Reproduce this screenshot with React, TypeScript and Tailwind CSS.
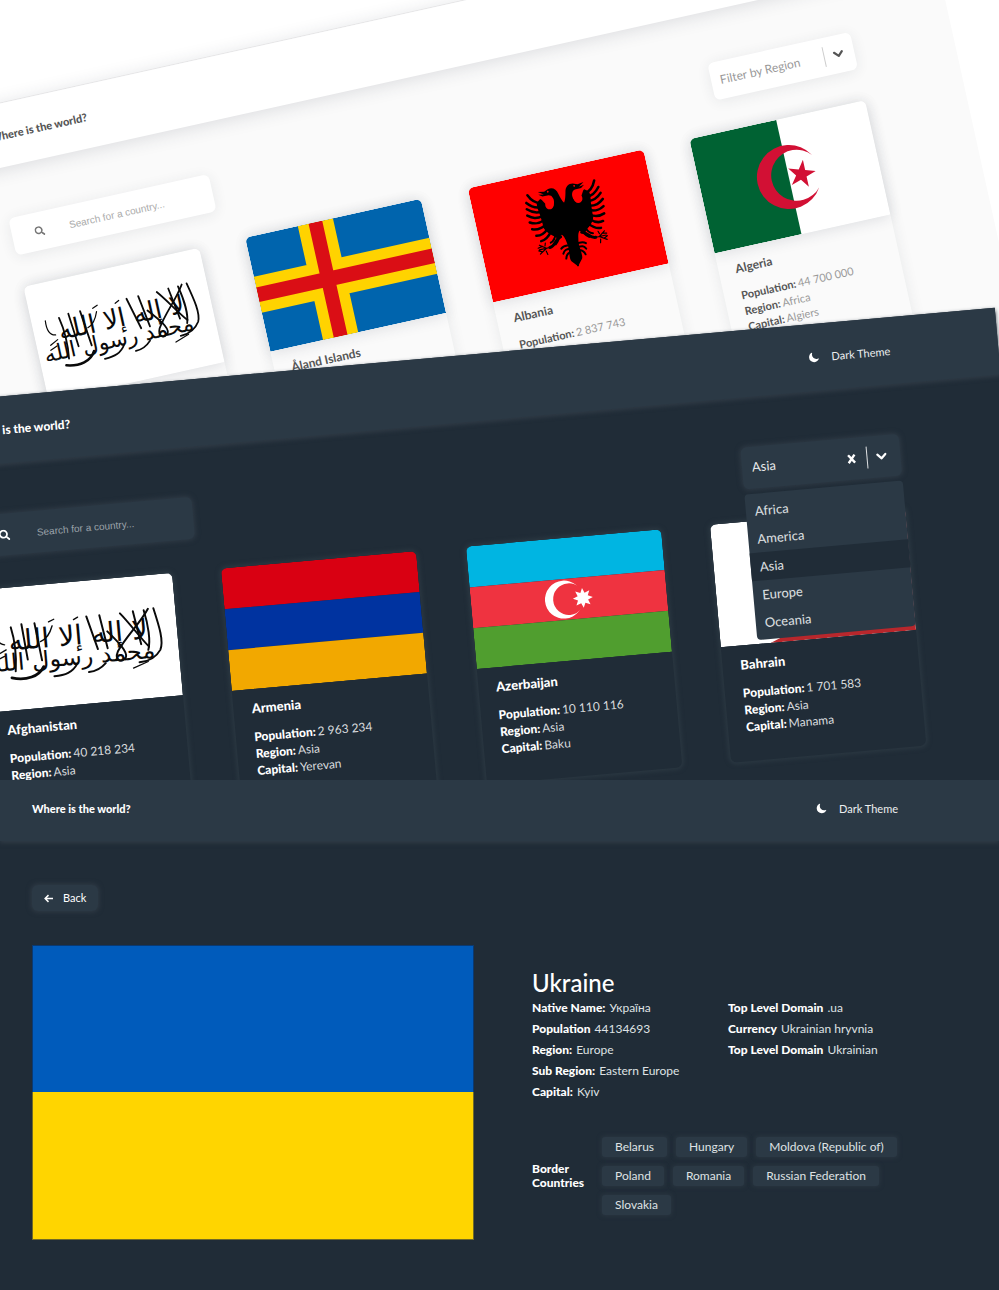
import React from "react";
import { FaSearch } from "react-icons/fa";
import { IoMoon } from "react-icons/io5";

type Theme = "light" | "dark";

type Country = {
  name: string;
  population: string;
  region: string;
  capital: string;
  flag: React.ReactNode;
};

const FLAG = "block h-full w-full";

function starPoints(cx: number, cy: number, outer: number, inner: number, tips: number, start = 0) {
  return Array.from({ length: tips * 2 }, (_, i) => {
    const r = i % 2 === 0 ? outer : inner;
    const a = start + (Math.PI * i) / tips;
    return `${(cx + r * Math.cos(a)).toFixed(2)},${(cy + r * Math.sin(a)).toFixed(2)}`;
  }).join(" ");
}

function AfghanistanFlag() {
  return (
    <svg viewBox="0 0 180 117" preserveAspectRatio="none" className={FLAG} role="img" aria-label="Flag of Afghanistan">
      <rect width="180" height="117" fill="#fff" />
      <g fill="#0a0a0a" fontFamily="'DejaVu Sans', sans-serif" textAnchor="middle" direction="rtl">
        <text x="89" y="60" fontSize="26">لا إله إلا الله</text>
        <text x="82" y="79" fontSize="22">محمد رسول الله</text>
      </g>
      <g fill="none" stroke="#0a0a0a" strokeLinecap="round" strokeWidth="1.8">
        <path d="M160 32c4 18 7 32 3 40-4 6-11 10-20 10" />
        <path d="M151 33c3 14 4 30 1 38M141 33l5 32" />
        <path d="M155 32c-9 14-22 24-31 38-4 8 3 12 7 6 2-5-5-14-15-26" />
        <path d="M129 34c8 10 16 24 24 34" />
        <path d="M110 34l5 32M98 34l8 32" />
        <path d="M55 78c-5 9-17 12-30 8" strokeWidth="2.6" />
        <path d="M86 78c-5 8-12 10-22 10M112 80c-5 5-10 7-16 7" />
        <path d="M28 38c3 14 3 28 1 42M38 36l3 34M50 36l4 36" />
        <path d="M14 38c-1 10 1 15 7 16M14 63l8-4M13 68l7-3" strokeWidth="1.2" />
        <path d="M63 36l5-2M66 40c-3 8-6 12-12 14M86 36l4-2M137 87l14-5" strokeWidth="1.2" />
      </g>
    </svg>
  );
}

function AlandFlag() {
  return (
    <svg viewBox="0 0 180 117" preserveAspectRatio="none" className={FLAG} role="img" aria-label="Flag of Åland">
      <rect width="180" height="117" fill="#0064ad" />
      <path d="M54 0h36v117H54zM0 40h180v37H0z" fill="#ffd300" />
      <path d="M65 0h14v117H65zM0 51h180v15H0z" fill="#da0e15" />
    </svg>
  );
}

function EagleHalf() {
  return (
    <g>
      <path d="M-1 29H0C2 26 3 22 4 18C5 12 9 9 14 10L19 12L26 11L20 15L26 14L22 17L15 17C10 18 10 24 12 29C14 33 20 32 20 26C22 24 23 20 25 19L29 22C31 24 30 30 29 36L28 52C25 60 18 62 16 66L10 63C7 66 7 72 6 76C6 84 8 91 6 94L0 101H-1Z" />
      <g fill="none" stroke="#000" strokeLinecap="round">
        <path d="M24 24C31 23 35 19 38 12M26 28C33 28 37 25 41 20M26 33C34 34 38 31 42 27M26 38C34 40 38 38 43 34M26 43C33 46 37 45 42 42M25 48C31 52 36 52 41 50M24 53C29 58 34 59 38 58M21 57C25 62 30 65 34 65" strokeWidth="2.8" />
        <path d="M16 59c2 6 4 9 8 10M12 60c1 5 3 9 7 12" strokeWidth="2.2" />
        <path d="M4 76c5 0 7-1 10 2M4 80c5 0 7 0 9 4M4 84c4 0 6 2 7 6" strokeWidth="2.2" />
        <path d="M12 65c6 1 8 9 14 9" strokeWidth="3.4" />
        <path d="M25 74l13 0M30 74l7-5M30 74l8 5M34 71l5 1M35 77l4-2M31 77l-1 4M31 71l-1-3" strokeWidth="1.3" />
      </g>
      <path d="M12 22C11 27 14 33 18 31C21 29 20 24 17 23" fill="none" stroke="#f00" strokeWidth="2.4" strokeLinecap="round" />
      <circle cx="15" cy="13" r="1" fill="#f00" />
    </g>
  );
}

function AlbaniaFlag() {
  return (
    <svg viewBox="0 0 180 117" preserveAspectRatio="none" className={FLAG} role="img" aria-label="Flag of Albania">
      <rect width="180" height="117" fill="#f00" />
      <g transform="translate(91 9) scale(0.9)">
        <EagleHalf />
        <g transform="scale(-1 1)">
          <EagleHalf />
        </g>
      </g>
    </svg>
  );
}

function AlgeriaFlag() {
  return (
    <svg viewBox="0 0 180 117" preserveAspectRatio="none" className={FLAG} role="img" aria-label="Flag of Algeria">
      <rect width="180" height="117" fill="#fff" />
      <rect width="89" height="117" fill="#006233" />
      <path d="M116.500 42A32 32 0 1 0 116.500 75A25.500 25.500 0 1 1 116.500 42Z" fill="#d21034" />
      <polygon points={starPoints(102, 58.500, 14.500, 5.500, 5)} fill="#d21034" />
    </svg>
  );
}

function ArmeniaFlag() {
  return (
    <svg viewBox="0 0 196 123" preserveAspectRatio="none" className={FLAG} role="img" aria-label="Flag of Armenia">
      <rect width="196" height="41" fill="#d90012" />
      <rect y="41" width="196" height="41" fill="#0033a0" />
      <rect y="82" width="196" height="41" fill="#f2a800" />
    </svg>
  );
}

function AzerbaijanFlag() {
  return (
    <svg viewBox="0 0 196 123" preserveAspectRatio="none" className={FLAG} role="img" aria-label="Flag of Azerbaijan">
      <rect width="196" height="41" fill="#00b5e2" />
      <rect y="41" width="196" height="41" fill="#ef3340" />
      <rect y="82" width="196" height="41" fill="#509e2f" />
      <circle cx="93" cy="61.500" r="19" fill="#fff" />
      <circle cx="98" cy="61.500" r="15.800" fill="#ef3340" />
      <polygon points={starPoints(112, 61.500, 10, 5.500, 8)} fill="#fff" />
    </svg>
  );
}

function BahrainFlag() {
  return (
    <svg viewBox="0 0 196 123" preserveAspectRatio="none" className={FLAG} role="img" aria-label="Flag of Bahrain">
      <rect width="196" height="123" fill="#fff" />
      <path d="M196 0H50L80 12.300L50 24.600L80 36.900L50 49.200L80 61.500L50 73.800L80 86.100L50 98.400L80 110.700L50 123H196Z" fill="#b8272c" />
    </svg>
  );
}

const lightCountries: Country[] = [
  { name: "Afghanistan", population: "40 218 234", region: "Asia", capital: "Kabul", flag: <AfghanistanFlag /> },
  { name: "Åland Islands", population: "28 875", region: "Europe", capital: "Mariehamn", flag: <AlandFlag /> },
  { name: "Albania", population: "2 837 743", region: "Europe", capital: "Tirana", flag: <AlbaniaFlag /> },
  { name: "Algeria", population: "44 700 000", region: "Africa", capital: "Algiers", flag: <AlgeriaFlag /> },
];

const darkCountries: Country[] = [
  { name: "Afghanistan", population: "40 218 234", region: "Asia", capital: "Kabul", flag: <AfghanistanFlag /> },
  { name: "Armenia", population: "2 963 234", region: "Asia", capital: "Yerevan", flag: <ArmeniaFlag /> },
  { name: "Azerbaijan", population: "10 110 116", region: "Asia", capital: "Baku", flag: <AzerbaijanFlag /> },
  { name: "Bahrain", population: "1 701 583", region: "Asia", capital: "Manama", flag: <BahrainFlag /> },
];

const regions = ["Africa", "America", "Asia", "Europe", "Oceania"];

function Chevron() {
  return (
    <svg viewBox="0 0 12 8" className="h-2 w-3" fill="none" stroke="currentColor" strokeWidth="2.2" strokeLinecap="round" strokeLinejoin="round" aria-hidden="true">
      <path d="M2 2l4 4 4-4" />
    </svg>
  );
}

function ThemeButton() {
  return (
    <button type="button" className="flex items-center gap-3 text-[11px] leading-4 text-[#eceeef]">
      <IoMoon className="size-[11px] text-white" />
      Dark Theme
    </button>
  );
}

function SearchBox({ theme }: { theme: Theme }) {
  return (
    <label
      className={
        theme === "light"
          ? "flex h-[38px] w-[205px] items-center gap-[25px] rounded-md bg-white pl-[23px] shadow-[0_2px_14px_rgba(40,50,70,0.09)]"
          : "flex h-[42px] w-[222px] items-center gap-[27px] rounded-md bg-[#2b3945] pl-[27px] shadow-[0_0_5px_1px_#303b46]"
      }
    >
      <FaSearch className={theme === "light" ? "size-[10px] shrink-0 text-[#777]" : "size-[11px] shrink-0"} />
      <input
        type="search"
        aria-label="Search for a country"
        placeholder="Search for a country..."
        className={
          theme === "light"
            ? "min-w-0 flex-1 bg-transparent font-['Liberation_Sans',sans-serif] text-[10px] outline-none placeholder:text-[#aaa]"
            : "min-w-0 flex-1 bg-transparent font-['Liberation_Sans',sans-serif] text-[10px] outline-none placeholder:text-[#9ba3aa]"
        }
      />
    </label>
  );
}

function CountryCard({ country, theme }: { country: Country; theme: Theme }) {
  const light = theme === "light";
  return (
    <article
      className={
        light
          ? "w-[180px] rounded-md bg-[#fafafa] shadow-[0_0_14px_rgba(40,50,70,0.09)]"
          : "w-[196px] rounded-md bg-[#202c37] shadow-[0_0_4px_2px_#2b3842]"
      }
    >
      <div className={light ? "h-[117px] overflow-hidden rounded-t-md shadow-[0_2px_14px_rgba(40,50,70,0.13)]" : "h-[123px] overflow-hidden rounded-t-md"}>
        {country.flag}
      </div>
      <div className={light ? "px-[17px] pt-3 pb-8" : "px-[18px] pt-[10px] pb-[26px]"}>
        <h3 className={light ? "text-[12px] leading-4 font-bold text-[#555]" : "text-[13px] leading-[18px] font-black"}>{country.name}</h3>
        <dl className={light ? "pt-[11px] text-[11px] leading-4 text-[#999]" : "pt-[11px] text-[12px] leading-[17px] text-[#d8dbde]"}>
          {[
            ["Population:", country.population],
            ["Region:", country.region],
            ["Capital:", country.capital],
          ].map(([label, value]) => (
            <div key={label} className="flex gap-[2px]">
              <dt className={light ? "font-bold text-[#555]" : "font-black text-white"}>{label}</dt>
              <dd>{value}</dd>
            </div>
          ))}
        </dl>
      </div>
    </article>
  );
}

function LightPanel() {
  return (
    <section className="absolute top-[129px] left-[-115px] h-[520px] w-[calc(100%+64px)] origin-top-left rotate-[-12.5deg] bg-[#fafafa] text-[#555]">
      <header className="flex h-[63px] items-center bg-white pr-[100px] pl-[101px] shadow-[0_2px_18px_rgba(40,50,70,0.15)]">
        <h2 className="text-[11px] leading-4 font-black">Where is the world?</h2>
      </header>
      <div className="pt-[51px] pr-[100px] pl-[101px]">
        <div className="flex justify-between">
          <SearchBox theme="light" />
          <label className="flex h-[38px] w-[146px] items-center rounded-md bg-white pr-[10px] pl-[9px] shadow-[0_2px_14px_rgba(40,50,70,0.09)]">
            <select aria-label="Filter by Region" defaultValue="" className="min-w-0 flex-1 appearance-none bg-transparent text-[12px] text-[#999] outline-none">
              <option value="">Filter by Region</option>
              {regions.map((r) => (
                <option key={r}>{r}</option>
              ))}
            </select>
            <span className="mr-2 h-5 w-px bg-[#ccc]" />
            <Chevron />
          </label>
        </div>
        <div className="flex justify-between pt-8">
          {lightCountries.map((c) => (
            <CountryCard key={c.name} country={c} theme="light" />
          ))}
        </div>
      </div>
    </section>
  );
}

function DarkPanel() {
  return (
    <section className="absolute top-[404px] left-[-85px] h-[560px] w-[calc(100%+85px)] origin-top-left rotate-[-5.1deg] bg-[#202c37] text-white">
      <header className="flex h-[67px] items-center justify-between bg-[#2b3945] pr-[108px] pl-[45px] shadow-[0_2px_4px_#303b46]">
        <h2 className="text-[12px] leading-4 font-black">Where is the world?</h2>
        <ThemeButton />
      </header>
      <div className="pt-[50px] pr-[107px] pl-[45px]">
        <div className="flex justify-between">
          <SearchBox theme="dark" />
          <div className="relative w-[159px]">
            <div className="flex h-[42px] items-center rounded-md bg-[#2b3945] pr-[13px] pl-[10px] shadow-[0_0_5px_1px_#303b46]">
              <select aria-label="Region" defaultValue="Asia" className="min-w-0 flex-1 appearance-none bg-transparent text-[13px] text-[#e6e8ea] outline-none">
                {regions.map((r) => (
                  <option key={r}>{r}</option>
                ))}
              </select>
              <button type="button" aria-label="Clear region">
                <svg viewBox="0 0 10 10" className="size-[10px]" fill="none" stroke="currentColor" strokeWidth="2.4" aria-hidden="true">
                  <path d="M1.800 1l6.400 8M8.200 1l-6.400 8" />
                </svg>
              </button>
              <span className="mr-2 ml-[10px] h-[22px] w-px bg-[#dfe1e3]" />
              <Chevron />
            </div>
            <ul role="listbox" aria-label="Regions" className="absolute top-[47px] left-0 z-10 w-full rounded-sm bg-[#2b3945] py-[3px] text-[13px] leading-[28px] font-medium text-[#d5d9dc]">
              {regions.map((r) => (
                <li key={r} role="option" aria-selected={r === "Asia"} className={r === "Asia" ? "bg-[#202c37] px-[9px]" : "px-[9px]"}>
                  {r}
                </li>
              ))}
            </ul>
          </div>
        </div>
        <div className="flex justify-between pt-8">
          {darkCountries.map((c) => (
            <CountryCard key={c.name} country={c} theme="dark" />
          ))}
        </div>
      </div>
    </section>
  );
}

function Fact({ label, value }: { label: string; value: string }) {
  return (
    <div className="flex gap-[4px]">
      <dt className="font-black text-white">{label}</dt>
      <dd>{value}</dd>
    </div>
  );
}

const borders = ["Belarus", "Hungary", "Moldova (Republic of)", "Poland", "Romania", "Russian Federation", "Slovakia"];

function DetailPage() {
  return (
    <section className="bg-[#202c37] text-white">
      <header className="flex h-[61px] items-center justify-between bg-[#2b3945] pr-[101px] pb-1 pl-8 shadow-[0_2px_4px_#303b46]">
        <h1 className="text-[11px] leading-4 font-black">Where is the world?</h1>
        <ThemeButton />
      </header>
      <main className="pt-11 pr-[101px] pb-[50px] pl-8">
        <button type="button" className="flex h-[26px] items-center gap-[10px] rounded-md bg-[#2b3945] px-3 text-[11px] shadow-[0_0_5px_1px_#303b46]">
          <svg viewBox="0 0 8 8" className="size-[9px]" fill="none" stroke="currentColor" strokeWidth="1.3" aria-hidden="true">
            <path d="M8 4H1.200M4 1L1 4l3 3" />
          </svg>
          Back
        </button>
        <div className="grid grid-cols-[442fr_366fr] items-center gap-[58px] pt-[34px]">
          <svg viewBox="0 0 442 295" preserveAspectRatio="none" className="block w-full" role="img" aria-label="Flag of Ukraine">
            <rect width="442" height="147" fill="#005bbb" />
            <rect y="147" width="442" height="148" fill="#ffd500" />
            <rect x="0.500" y="0.500" width="441" height="294" fill="none" stroke="#10233f" strokeOpacity="0.600" />
          </svg>
          <div>
            <h2 className="text-[24px] leading-7 font-medium">Ukraine</h2>
            <div className="grid grid-cols-[196px_1fr] text-[12px] leading-[21px] whitespace-nowrap text-[#dfe2e4]">
              <dl>
                <Fact label="Native Name:" value="Україна" />
                <Fact label="Population" value="44134693" />
                <Fact label="Region:" value="Europe" />
                <Fact label="Sub Region:" value="Eastern Europe" />
                <Fact label="Capital:" value="Kyiv" />
              </dl>
              <dl>
                <Fact label="Top Level Domain" value=".ua" />
                <Fact label="Currency" value="Ukrainian hryvnia" />
                <Fact label="Top Level Domain" value="Ukrainian" />
              </dl>
            </div>
            <div className="flex items-center pt-[35px] pb-[2px]">
              <h3 className="w-[70px] shrink-0 text-[12px] leading-[14px] font-black">Border Countries</h3>
              <ul className="flex flex-wrap gap-[9px]">
                {borders.map((b) => (
                  <li key={b}>
                    <a href="#" className="block rounded-[3px] bg-[#2b3945] px-[13px] text-[12px] leading-5 text-[#dfe2e4] shadow-[0_0_4px_1px_#2a3641]">
                      {b}
                    </a>
                  </li>
                ))}
              </ul>
            </div>
          </div>
        </div>
      </main>
    </section>
  );
}

export default function App() {
  return (
    <div className="overflow-hidden bg-[#202c37] font-['Lato','Noto_Sans',sans-serif]">
      <div className="relative h-[780px] overflow-hidden bg-white">
        <div className="absolute top-[128px] left-[-115px] h-px w-[calc(100%+64px)] origin-top-left rotate-[-12.5deg] bg-[#f2f2f2]" />
        <LightPanel />
        <DarkPanel />
      </div>
      <DetailPage />
    </div>
  );
}
